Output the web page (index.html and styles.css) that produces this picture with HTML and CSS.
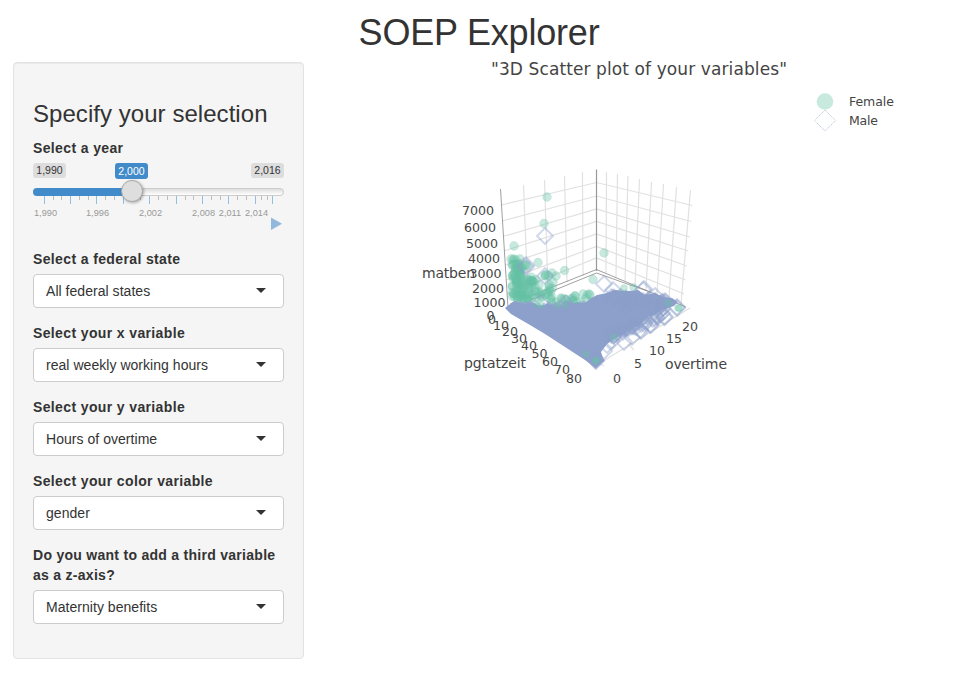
FILE: index.html
```html
<!DOCTYPE html>
<html lang="en">
<head>
<meta charset="utf-8">
<title>SOEP Explorer</title>
<link rel="stylesheet" href="styles.css">
</head>
<body>
<h1 class="title">SOEP Explorer</h1>
<div class="layout">
  <form class="sidebar">
    <h2 class="heading">Specify your selection</h2>
    <div class="group slider-group">
      <label class="label">Select a year</label>
      <div class="slider">
        <div class="tags"><span class="tag">1,990</span><span class="tag current">2,000</span><span class="tag">2,016</span></div>
        <div class="track"><div class="fill"></div><span class="handle"></span></div>
        <svg class="ticks" width="251" height="36" viewBox="33 195 251 36">
          <path stroke="#92bee1" d="M44.5 196v8M70.5 196v8M96.5 196v8M123.5 196v8M149.5 196v8M176.5 196v8M202.5 196v8M228.5 196v8M255.5 196v8M272.5 196v8"/>
          <path stroke="#aaa" stroke-opacity=".75" d="M53.5 196v4M61.5 196v4M79.5 196v4M88.5 196v4M105.5 196v4M114.5 196v4M140.5 196v4M158.5 196v4M167.5 196v4M185.5 196v4M193.5 196v4M211.5 196v4M220.5 196v4M237.5 196v4M246.5 196v4M261.5 196v4M267.5 196v4"/>
          <g class="years"><text x="45.5" y="216">1,990</text><text x="97.5" y="216">1,996</text><text x="150.5" y="216">2,002</text><text x="203.5" y="216">2,008</text><text x="230" y="216">2,011</text><text x="256.5" y="216">2,014</text></g>
          <path fill="#92b9dc" d="M271 217.5L282 223.7L271 230Z"/>
        </svg>
      </div>
    </div>
    <div class="group"><label class="label">Select a federal state</label><div class="select">All federal states<i class="caret"></i></div></div>
    <div class="group"><label class="label">Select your x variable</label><div class="select">real weekly working hours<i class="caret"></i></div></div>
    <div class="group"><label class="label">Select your y variable</label><div class="select">Hours of overtime<i class="caret"></i></div></div>
    <div class="group"><label class="label">Select your color variable</label><div class="select">gender<i class="caret"></i></div></div>
    <div class="group"><label class="label label-long">Do you want to add a third variable as a z-axis?</label><div class="select">Maternity benefits<i class="caret"></i></div></div>
  </form>
  <svg class="plot" width="626" height="408" viewBox="334 54 626 408">
    <text class="plot-title" x="491" y="75" textLength="296">"3D Scatter plot of your variables"</text>
    <circle cx="825" cy="101.500" r="8.300" fill="#c8e9de"/>
    <path class="legend-diamond" d="M825 110L835.500 120.500L825 131L814.500 120.500Z"/>
    <g class="legend"><text x="849" y="106" textLength="45">Female</text><text x="849" y="125" textLength="29">Male</text></g>
    <g id="grid" class="grid"></g>
    <path class="axis" d="M596.500 169.500V271"/>
    <path class="floor" d="M596.500 269.500L510 304M596.500 273L518 305M596.500 269.500L686 307M596.500 273L650 292M500.500 189L508 308"/>
    <g id="back"></g>
    <path class="cloud" d="M505 308L514 301L525 304L532 302L540 306L548 304L560 307L570 304L577 302L585 303L590 299L597 295L607 293L615 290L628 291L638 290L645 295L655 293L663 297L672 298L678 302L674 306L664 309L655 314L648 317L640 325L632 329L625 334L615 338L607 344L601 352L604 361L596 368L585 360L565 347L545 334L530 325L511 314Z"/>
    <g id="front"></g>
    <g class="nums">
      <text x="462" y="215">7000</text><text x="464" y="232">6000</text><text x="466" y="248">5000</text><text x="468" y="263">4000</text><text x="469.500" y="278">3000</text><text x="472" y="293">2000</text><text x="473.500" y="307">1000</text><text x="486.500" y="320">0</text>
      <text x="488" y="324">0</text><text x="493" y="330">10</text><text x="502" y="336">20</text><text x="511" y="343">30</text><text x="521" y="350">40</text><text x="531.500" y="358">50</text><text x="542" y="366">60</text><text x="554" y="374">70</text><text x="566" y="383">80</text>
      <text x="613" y="383">0</text><text x="634" y="368">5</text><text x="649" y="355">10</text><text x="666" y="343">15</text><text x="682" y="331">20</text>
    </g>
    <g class="names"><text x="422" y="278" textLength="53">matben</text><text x="464" y="368" textLength="62">pgtatzeit</text><text x="665" y="369" textLength="62">overtime</text></g>
  </svg>
</div>
<script src="plot.js"></script>
</body>
</html>
```
FILE: styles.css
```css
* { box-sizing: border-box; }
body { margin: 0; background: #fff; color: #333; font: 14px/20px "Liberation Sans", Arial, sans-serif; }
.title { margin: 0; padding: 13px 2px 0 0; height: 62px; font-size: 36px; line-height: 39px; font-weight: 400; letter-spacing: -.2px; text-align: center; }
.layout { display: flex; align-items: flex-start; gap: 30px; padding-left: 13px; }
.sidebar { flex: none; width: 291px; height: 597px; padding: 38px 19px 19px; border: 1px solid #e3e3e3; border-radius: 4px; background: #f5f5f5; box-shadow: inset 0 1px 1px rgba(0,0,0,.05); }
.heading { margin: 0 0 11px; font-size: 24px; line-height: 26px; font-weight: 400; letter-spacing: .05px; }
.group { margin-bottom: 15px; }
.slider-group { margin-bottom: 18px; }
.label { display: block; margin-bottom: 5px; font-weight: 700; letter-spacing: .37px; }
.label-long { letter-spacing: .28px; }
.slider { height: 68px; }
.tags { display: flex; height: 24px; align-items: flex-start; }
.tag { width: 33px; height: 15px; border-radius: 3px; background: #ddd; color: #333; font-size: 10.500px; line-height: 15px; text-align: center; }
.current { height: 16px; line-height: 16px; margin: 0 103px 0 49px; background: #428bca; color: #fff; }
.track { position: relative; height: 8px; margin-top: 1px; border: 1px solid #ccc; border-radius: 8px; background: linear-gradient(#ddd, #fff); }
.fill { width: 99px; height: 8px; margin: -1px; border-radius: 8px 0 0 8px; background: #428bca; }
.handle { position: absolute; left: 87px; top: -9px; width: 22px; height: 22px; border: 1px solid #aaa; border-radius: 50%; background: #dedede; box-shadow: 1px 1px 3px rgba(0,0,0,.3); }
.ticks { display: block; margin-top: -1px; }
.years { font-size: 9.200px; fill: #999; text-anchor: middle; }
.select { display: flex; justify-content: space-between; align-items: center; height: 34px; padding: 0 17px 0 12px; border: 1px solid #ccc; border-radius: 4px; background: #fff; letter-spacing: .04px; }
.caret { border: 5px solid transparent; border-top-color: #333; border-bottom: 0; margin-top: -2px; }
.plot { flex: none; margin-top: -8px; font-family: "DejaVu Sans", Verdana, sans-serif; fill: #444; }
.plot-title { font-size: 17px; }
.legend { font-size: 12.500px; }
.legend-diamond { fill: none; stroke: #c5cfe5; stroke-dasharray: 1.500 .7; }
.grid { fill: none; stroke: #e1e1e1; stroke-width: 1.200; }
.axis { stroke: #999; stroke-width: 1.200; }
.floor { fill: none; stroke: #888; stroke-width: .8; }
.cloud { fill: #8da0cb; }
.female { fill: #66c2a5; fill-opacity: .36; stroke: #66c2a5; stroke-opacity: .25; stroke-width: .7; }
.male { fill: none; stroke: #8da0cb; stroke-opacity: .42; stroke-width: 1.800; }
.nums { font-size: 12.600px; }
.names { font-size: 14px; }
```
FILE: plot.js
```js
const NS = 'http://www.w3.org/2000/svg';
const grid = document.getElementById('grid');
const back = document.getElementById('back');
const front = document.getElementById('front');

function path(parent, d, cls) {
  const el = document.createElementNS(NS, 'path');
  el.setAttribute('d', d);
  if (cls) el.setAttribute('class', cls);
  parent.appendChild(el);
}
function dot(parent, x, y, r = 4.4) {
  const el = document.createElementNS(NS, 'circle');
  el.setAttribute('cx', x);
  el.setAttribute('cy', y);
  el.setAttribute('r', r);
  el.setAttribute('class', 'female');
  parent.appendChild(el);
}
function diamond(parent, x, y, r = 8) {
  path(parent, `M${x} ${y - r}L${x + r} ${y}L${x} ${y + r}L${x - r} ${y}Z`, 'male');
}

// Seeded generator keeps the point cloud stable between loads.
let seed = 11;
function rnd() {
  seed = (seed * 16807) % 2147483647;
  return seed / 2147483647;
}

// Vertical wall lines: top x, top y, bottom x, bottom y
[[523.5, 185, 528, 298], [544.5, 180, 548, 290], [564.5, 176, 567, 282], [582.5, 172, 583, 276],
 [606.5, 172, 606, 273], [617.5, 174, 616, 277], [628, 176, 625, 281], [639.5, 179, 635, 286],
 [651.5, 182, 646, 290], [663.5, 184, 657, 294], [676.5, 187, 669, 298], [690.5, 190, 681, 304]]
  .forEach(([a, b, c, d]) => path(grid, `M${a} ${b}L${c} ${d}`));
// Horizontal lines: left y, corner y, right y
[[205, 182.5, 205.5], [221, 196, 221.5], [236.5, 209, 237], [251, 221.5, 251], [265, 234, 266],
 [280, 246.5, 280], [294, 258, 294]]
  .forEach(([l, c, r], i) => path(grid, `M${501 + i} ${l}L596.5 ${c}L${692.5 - i * 1.4} ${r}`));
path(grid, 'M600 363L690 308M596 362L604 366M628 344L634 350');

[[547, 197], [544, 223.5], [514, 246], [604, 253], [564.5, 270.5], [538, 262.5], [593, 279.5],
 [511, 259], [513, 260], [514, 259], [516, 260], [520, 259], [526, 265], [527, 266], [525, 265],
 [545, 275], [545, 276], [546, 275], [552, 273], [539, 285], [549, 290], [553, 282], [556, 276],
 [533, 281], [532, 281], [534, 282], [575, 296], [575, 296], [587, 295], [589, 294], [590, 295],
 [583, 294], [564, 299], [561, 298], [571, 299], [548, 292], [536, 292], [542, 297]]
  .forEach(([x, y]) => dot(back, x, y));
for (let i = 0; i < 100; i++) {
  const y = 264 + rnd() * 36;
  dot(back, 512 + rnd() * (y > 278 ? 20 : 10), y);
}
for (let i = 0; i < 20; i++) dot(back, 526 + rnd() * 27, 275 + rnd() * 25);
for (let i = 0; i < 14; i++) dot(back, 550 + rnd() * 45, 298 + rnd() * 5);
[[545, 236], [526, 265], [526, 267], [545, 276], [604, 284], [613, 290], [540, 303], [566, 303]]
  .forEach(([x, y]) => diamond(back, x, y));

for (let i = 0; i < 60; i++) {
  const x = 520 + rnd() * 72;
  diamond(back, x, 307 + rnd() * 5, 6);
}
for (let i = 0; i < 50; i++) {
  const x = 605 + rnd() * 62;
  diamond(front, x, 294 + (x - 605) * 0.1 + rnd() * 10, 7);
}
for (let i = 0; i < 42; i++) {
  const x = 602 + rnd() * 64;
  diamond(front, x, 335 - (x - 602) * 0.42 + rnd() * 8, 7);
}
[[677, 308], [677, 307], [665, 317], [664, 317], [650, 325], [641, 331], [632, 337], [624, 342],
 [612, 341], [607, 345], [643, 290], [655, 296], [644, 289], [596, 361], [596, 360], [595, 360],
 [604, 351], [651, 325], [640, 330]]
  .forEach(([x, y]) => diamond(front, x, y));
[[596, 361], [596, 360], [586, 354], [678, 308], [679, 308], [668, 303], [614, 337], [624, 288], [633, 287],
 [537, 304], [541, 305], [557, 305], [577, 301], [565, 305]]
  .forEach(([x, y]) => dot(front, x, y, 3.5));
```
